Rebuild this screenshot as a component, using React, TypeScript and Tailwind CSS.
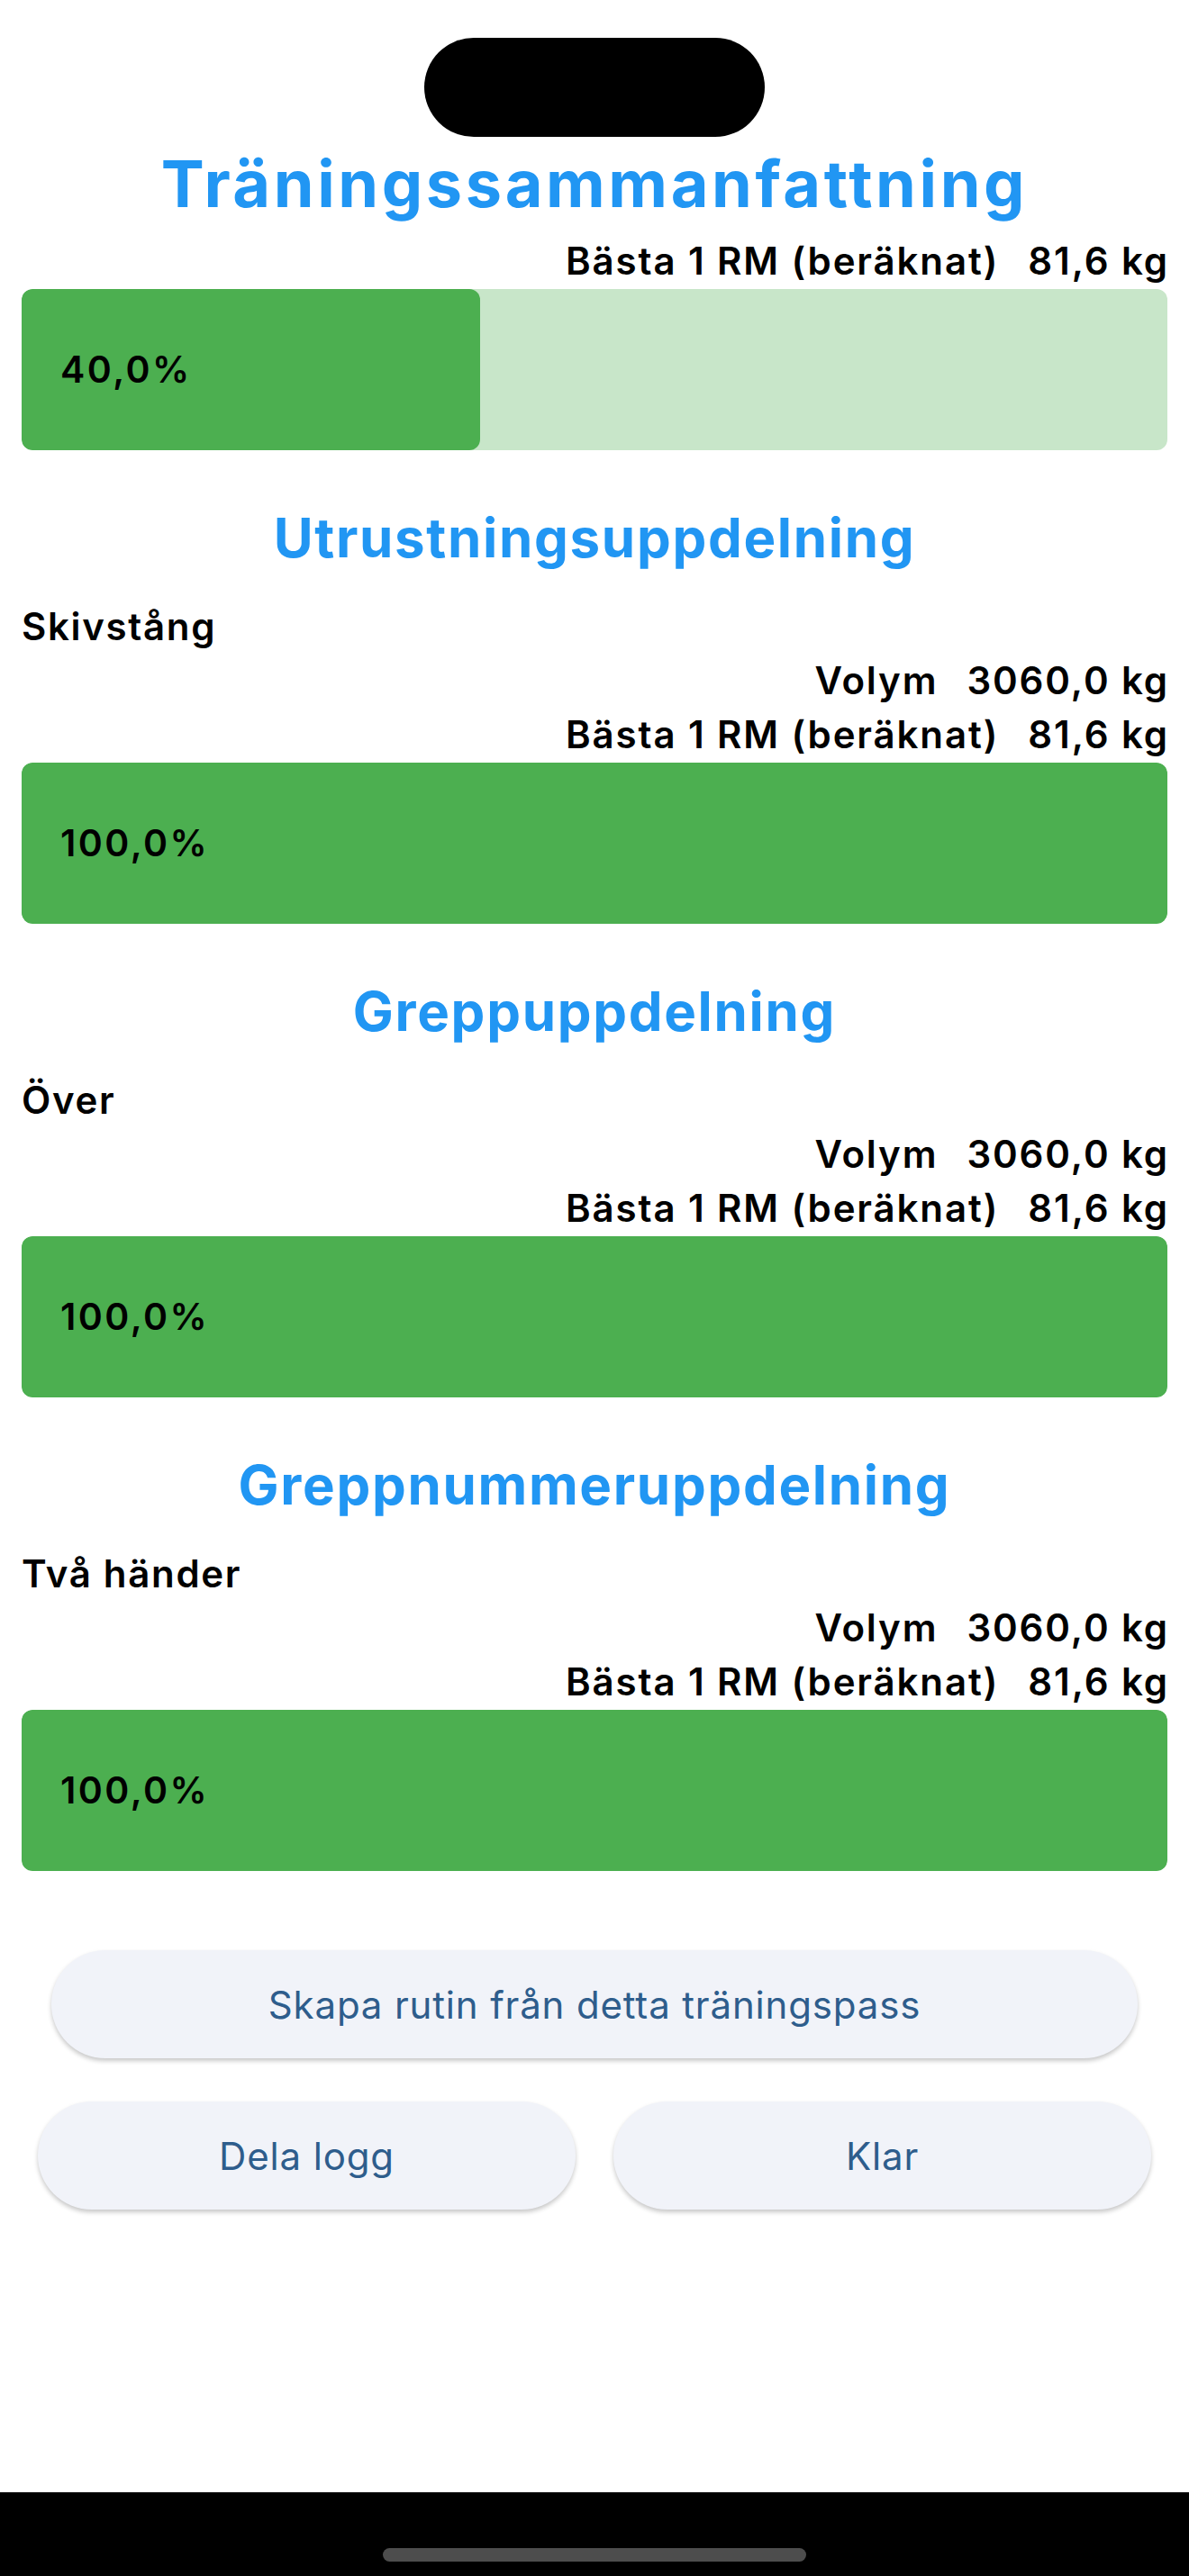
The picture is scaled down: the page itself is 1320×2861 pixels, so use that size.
const font = { fontFamily: "Inter, 'Noto Sans', sans-serif" }

type Section = {
  title: string
  label?: string
  volume?: string
  best: string
  percent: number
}

const sections: Section[] = [
  { title: "Träningssammanfattning", best: "81,6 kg", percent: 40 },
  { title: "Utrustningsuppdelning", label: "Skivstång", volume: "3060,0 kg", best: "81,6 kg", percent: 100 },
  { title: "Greppuppdelning", label: "Över", volume: "3060,0 kg", best: "81,6 kg", percent: 100 },
  { title: "Greppnummeruppdelning", label: "Två händer", volume: "3060,0 kg", best: "81,6 kg", percent: 100 },
]

function StatRow({ name, value }: { name: string; value: string }) {
  return (
    <div className="flex justify-end gap-[32px] text-[42px] leading-[60px] font-semibold tracking-[0.045em] text-black">
      <span>{name}</span>
      <span className="-mr-[2px]">{value}</span>
    </div>
  )
}

function ProgressBar({ percent }: { percent: number }) {
  return (
    <div className="relative h-[179px] rounded-[12px] bg-[#C8E6C9] overflow-hidden">
      <div className="h-full rounded-[12px] bg-[#4CAF50]" style={{ width: `${percent}%` }} />
      <div className="absolute inset-0 flex items-center pl-[43px] text-[41px] font-semibold tracking-[0.06em] text-black">
        {percent.toFixed(1).replace(".", ",")}%
      </div>
    </div>
  )
}

function SummarySection({ s, first }: { s: Section; first: boolean }) {
  if (first) {
    return (
      <div className="mt-[9px]">
        <h1 className="text-center text-[72px] leading-[86px] font-bold tracking-[0.05em] text-[#2196F3]">{s.title}</h1>
        <div className="mt-[13px]">
          <StatRow name="Bästa 1 RM (beräknat)" value={s.best} />
        </div>
        <div className="mt-[1px]">
          <ProgressBar percent={s.percent} />
        </div>
      </div>
    )
  }
  return (
    <div className="mt-[61px]">
      <h2 className="text-center text-[60px] leading-[72px] font-bold tracking-[0.028em] text-[#2196F3]">{s.title}</h2>
      <div className="mt-[33px] text-[42px] leading-[60px] font-semibold tracking-[0.04em] text-black">{s.label}</div>
      <StatRow name="Volym" value={s.volume ?? ""} />
      <StatRow name="Bästa 1 RM (beräknat)" value={s.best} />
      <div className="mt-[1px]">
        <ProgressBar percent={s.percent} />
      </div>
    </div>
  )
}

function PillButton({ children, className = "" }: { children: string; className?: string }) {
  return (
    <button
      className={
        "h-[120px] rounded-full bg-[#F1F3F9] text-[42px] font-normal tracking-[0.02em] text-[#2E5D8C] shadow-[0_3px_5px_rgba(0,0,0,0.22)] " +
        className
      }
    >
      {children}
    </button>
  )
}

export default function App() {
  return (
    <div className="min-h-[2861px] w-[1320px] bg-white flex flex-col" style={font}>
      {/* dynamic island */}
      <div className="pt-[42px] flex justify-center">
        <div className="w-[378px] h-[110px] rounded-full bg-black" />
      </div>

      <div className="px-[24px]">
        {sections.map((s, i) => (
          <SummarySection key={s.title} s={s} first={i === 0} />
        ))}
      </div>

      <div className="mt-[88px] px-[57px] flex">
        <PillButton className="flex-1">Skapa rutin från detta träningspass</PillButton>
      </div>
      <div className="mt-[48px] px-[42px] flex gap-[42px]">
        <PillButton className="flex-1">Dela logg</PillButton>
        <PillButton className="flex-1">Klar</PillButton>
      </div>

      {/* home indicator bar */}
      <div className="mt-auto h-[93px] bg-black flex justify-center">
        <div className="mt-[62px] w-[470px] h-[15px] rounded-full bg-[#4D4D4D]" />
      </div>
    </div>
  )
}
